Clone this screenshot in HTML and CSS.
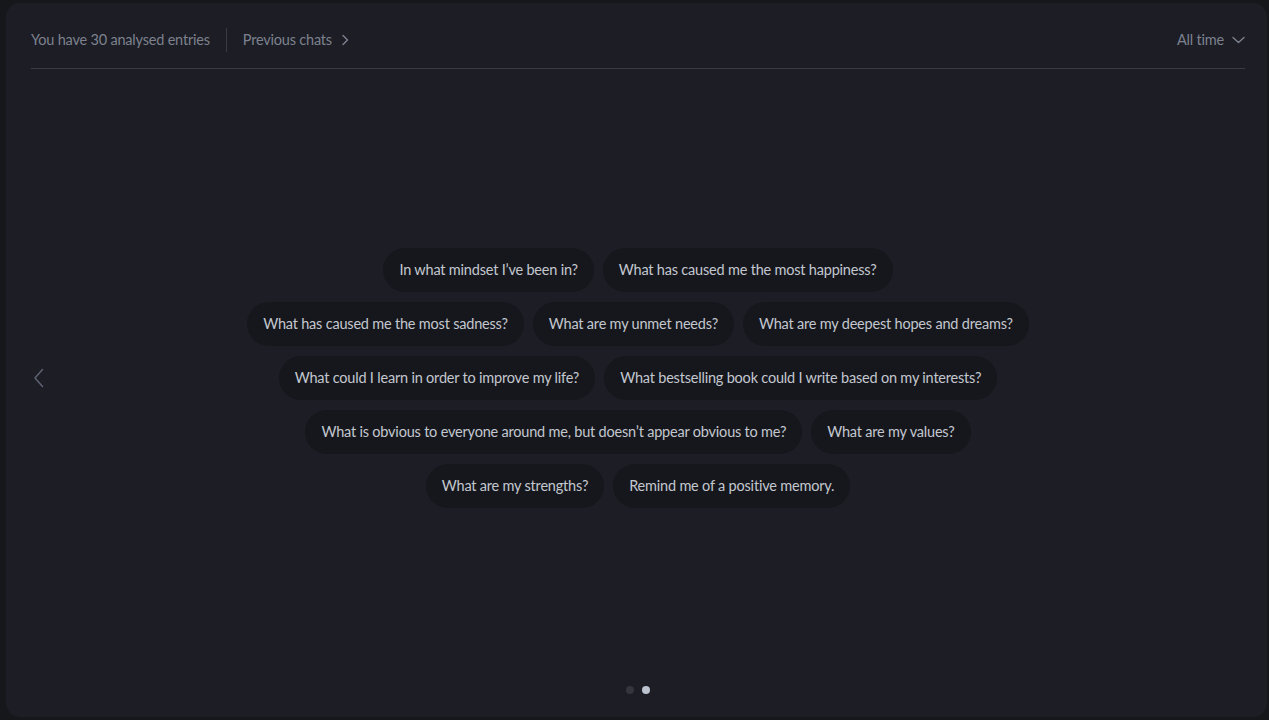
FILE: index.html
```html
<!DOCTYPE html>
<html lang="en">
<head>
<meta charset="utf-8">
<title>Insights</title>
<link rel="stylesheet" href="styles.css">
</head>
<body>
<div class="card">
  <header class="header">
    <div class="header-left">
      <span class="count">You have 30 analysed entries</span>
      <span class="sep"></span>
      <a class="prev" href="#">Previous chats
        <svg class="chev" width="8" height="12" viewBox="0 0 8 12"><path d="M2 1.5 6.5 6 2 10.5" fill="none" stroke="currentColor" stroke-width="1.4" stroke-linecap="round" stroke-linejoin="round"/></svg>
      </a>
    </div>
    <button class="range">All time
      <svg width="13" height="8" viewBox="0 0 13 8"><path d="M1 1.5 6.5 6.5 12 1.5" fill="none" stroke="currentColor" stroke-width="1.4" stroke-linecap="round" stroke-linejoin="round"/></svg>
    </button>
  </header>
  <main class="main">
    <button class="nav-prev" aria-label="Previous">
      <svg width="11" height="20" viewBox="0 0 11 20"><path d="M9.5 1.5 2 10l7.5 8.5" fill="none" stroke="currentColor" stroke-width="1.5" stroke-linecap="round" stroke-linejoin="round"/></svg>
    </button>
    <div class="prompts">
      <div class="row">
        <span class="pill">In what mindset I’ve been in?</span>
        <span class="pill">What has caused me the most happiness?</span>
      </div>
      <div class="row">
        <span class="pill">What has caused me the most sadness?</span>
        <span class="pill">What are my unmet needs?</span>
        <span class="pill">What are my deepest hopes and dreams?</span>
      </div>
      <div class="row">
        <span class="pill">What could I learn in order to improve my life?</span>
        <span class="pill">What bestselling book could I write based on my interests?</span>
      </div>
      <div class="row">
        <span class="pill">What is obvious to everyone around me, but doesn’t appear obvious to me?</span>
        <span class="pill">What are my values?</span>
      </div>
      <div class="row">
        <span class="pill">What are my strengths?</span>
        <span class="pill">Remind me of a positive memory.</span>
      </div>
    </div>
  </main>
  <footer class="dots">
    <span class="dot"></span>
    <span class="dot active"></span>
  </footer>
</div>
</body>
</html>
```
FILE: styles.css
```css
* { box-sizing: border-box; }
html, body { height: 100%; }
body {
  margin: 0;
  background: #16171b;
  font-family: Lato, "Open Sans", sans-serif;
  overflow: hidden;
}
.card {
  margin: 3px 2px 3px 6px;
  height: 714px;
  background: #1c1d25;
  border-radius: 14px;
  display: flex;
  flex-direction: column;
  padding: 0 22px 0 25px;
}
.header {
  height: 66px;
  border-bottom: 1px solid #393b44;
  display: flex;
  align-items: center;
  justify-content: space-between;
  padding-top: 8px;
}
.header-left { display: flex; align-items: center; }
.count, .prev, .range {
  font-size: 14.5px;
  color: #7d828e;
  letter-spacing: -0.2px;
}
.sep {
  width: 1px;
  height: 24px;
  background: #393b44;
  margin: 0 16px;
}
.prev {
  text-decoration: none;
  display: flex;
  align-items: center;
  gap: 9px;
}
.range {
  background: none;
  border: 0;
  padding: 0;
  font-family: inherit;
  display: flex;
  align-items: center;
  gap: 8px;
}
.main {
  flex: 1;
  position: relative;
  display: flex;
  align-items: center;
  justify-content: center;
}
.nav-prev {
  position: absolute;
  left: 2px;
  top: 50%;
  transform: translateY(-50%);
  background: none;
  border: 0;
  padding: 0;
  color: #5e6370;
  display: flex;
}
.prompts {
  display: flex;
  flex-direction: column;
  gap: 10px;
  align-items: center;
}
.row {
  display: flex;
  gap: 9px;
  justify-content: center;
}
.pill {
  height: 44px;
  padding: 0 16px;
  border-radius: 22px;
  background: #16171c;
  color: #c3c7d0;
  font-size: 14.5px;
  letter-spacing: -0.2px;
  display: flex;
  align-items: center;
  white-space: nowrap;
}
.dots {
  display: flex;
  justify-content: center;
  gap: 8px;
  padding: 0 0 23px;
}
.dot {
  width: 8px;
  height: 8px;
  border-radius: 50%;
  background: #34363e;
}
.dot.active { background: #bcc3cf; }
```
